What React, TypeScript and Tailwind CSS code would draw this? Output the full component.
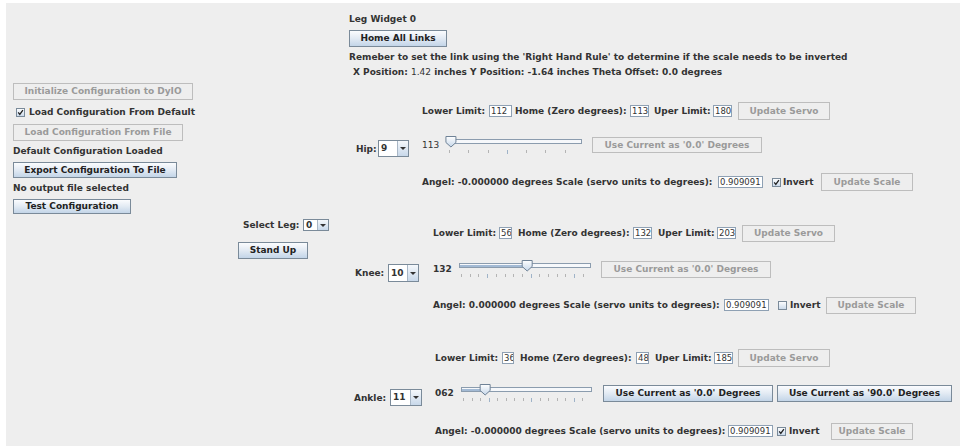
import clsx from 'clsx';
import type { ReactNode } from 'react';

function Btn({ on = false, className, children }: { on?: boolean; className: string; children: ReactNode }) {
    return (
        <div
            className={clsx(
                'flex shrink-0 items-center justify-center border leading-none',
                on
                    ? 'border-[#7a8a99] bg-linear-to-b from-[#fbfcfe] via-[#e2eaf3] to-[#c3d5e8] text-[#222]'
                    : 'border-[#bdbdbd] bg-[#eeeeee] text-[#9a9a9a]',
                className,
            )}
        >
            {children}
        </div>
    );
}

function Field({ className, children }: { className: string; children: ReactNode }) {
    return (
        <div
            className={clsx(
                'flex h-[12px] shrink-0 items-center overflow-hidden border border-[#8ea0b3] bg-white pl-[1px] text-[8.5px] font-normal leading-none text-[#333]',
                className,
            )}
        >
            {children}
        </div>
    );
}

function Check({ on, className }: { on: boolean; className?: string }) {
    return (
        <svg width="9" height="9" viewBox="0 0 9 9" className={clsx('shrink-0', className)}>
            <defs>
                <linearGradient id="cbg" x1="0" y1="0" x2="0" y2="1">
                    <stop offset="0" stopColor="#ffffff" />
                    <stop offset="1" stopColor="#c8d8ea" />
                </linearGradient>
            </defs>
            <rect x="0.5" y="0.5" width="8" height="8" fill="url(#cbg)" stroke="#7a8a99" />
            {on && <path d="M2.2 4.4 L3.8 6.4 L6.9 2.2" stroke="#222" strokeWidth="1.3" fill="none" />}
        </svg>
    );
}

function Combo({ value, className }: { value: string; className: string }) {
    return (
        <div className={clsx('flex shrink-0 border border-[#7a8a99] bg-white', className)}>
            <div className="flex flex-1 items-center pl-[2px] leading-none">{value}</div>
            <div className="flex w-[11px] items-center justify-center border-l border-[#a9b7c6] bg-linear-to-b from-[#f5f8fb] to-[#c8d8ea]">
                <svg width="6" height="3" viewBox="0 0 6 3">
                    <path d="M0 0H6L3 3Z" fill="#333" />
                </svg>
            </div>
        </div>
    );
}

// slider drawn like the Metal/Ocean JSlider: track, filled part, ticks every 10 units
function Slider({ w, a, b, min, max, val }: { w: number; a: number; b: number; min: number; max: number; val: number }) {
    const len = b - a;
    const pos = (v: number) => a + 2 + ((v - min) / (max - min)) * (len - 4);
    const tx = pos(val);
    const ticks: number[] = [];
    for (let v = min; v <= max; v += 10) ticks.push(pos(v));
    return (
        <svg width={w} height="20" className="shrink-0">
            <defs>
                <linearGradient id="thg" x1="0" y1="0" x2="0" y2="1">
                    <stop offset="0" stopColor="#ffffff" />
                    <stop offset="1" stopColor="#c5d6e9" />
                </linearGradient>
            </defs>
            <rect x={a + 0.5} y="4.5" width={len - 1} height="4" fill="#f6f8fb" stroke="#8b9cae" />
            <rect x={a + 1} y="6" width={Math.max(0, tx - a - 1)} height="2" fill="#a3bad4" />
            {ticks.map((x, i) => (
                <line
                    key={i}
                    x1={Math.round(x) + 0.5}
                    x2={Math.round(x) + 0.5}
                    y1="15"
                    y2={i % 5 === 3 ? 19 : 18}
                    stroke={i % 5 === 3 ? '#9fb3c8' : '#b4b4b4'}
                />
            ))}
            <path
                d={`M${tx - 5} 1.5 H${tx + 5} V7.5 L${tx} 12 L${tx - 5} 7.5 Z`}
                fill="url(#thg)"
                stroke="#6f8296"
            />
        </svg>
    );
}

const S = 'shrink-0';

export default function App() {
    return (
        <div className="h-[446px] w-[965px] overflow-hidden bg-white pl-[6px] pr-[5px] pt-[3px]">
            <div className="flex h-[443px] whitespace-nowrap bg-[#eeeeee] font-['DejaVu_Sans',sans-serif] text-[9px] font-bold leading-[12px] text-[#333]">
                {/* left column */}
                <div className="flex w-[224px] shrink-0 flex-col items-start pl-[7px] pt-[80px]">
                    <Btn className="h-[17px] w-[180px]">Initialize Configuration to DyIO</Btn>
                    <div className="mt-[6px] flex h-[12px] items-center">
                        <Check on className="ml-[3px]" />
                        <span className="ml-[4px]">Load Configuration From Default</span>
                    </div>
                    <Btn className="mt-[6px] h-[17px] w-[170px]">Load Configuration From File</Btn>
                    <div className="mt-[4px] h-[12px]">Default Configuration Loaded</div>
                    <Btn on className="mt-[5px] h-[16px] w-[164px]">
                        Export Configuration To File
                    </Btn>
                    <div className="mt-[4px] h-[12px]">No output file selected</div>
                    <Btn on className="mt-[5px] h-[15px] w-[118px]">
                        Test Configuration
                    </Btn>
                </div>

                {/* middle column */}
                <div className="flex w-[119px] shrink-0 flex-col items-start pl-[8px] pt-[215px]">
                    <div className="flex h-[14px] items-center">
                        <span className="ml-[5px] w-[60px]">Select Leg:</span>
                        <Combo value="0" className="h-[12px] w-[26px]" />
                    </div>
                    <Btn on className="mt-[10px] h-[17px] w-[70px]">
                        Stand Up
                    </Btn>
                </div>

                {/* leg widget */}
                <div className="flex min-w-0 flex-1 flex-col items-start pt-[10px]">
                    <div className="h-[12px]">Leg Widget 0</div>
                    <Btn on className="mt-[5px] h-[17px] w-[98px]">
                        Home All Links
                    </Btn>
                    <div className="mt-[4px] h-[12px]">
                        Remeber to set the link using the 'Right Hand Rule' to determine if the scale needs to be inverted
                    </div>
                    <div className="ml-[4px] mt-[3px] h-[12px]">
                        X Position: <span className="font-normal">1.42</span> inches Y Position: -1.64 inches Theta
                        Offset: 0.0 degrees
                    </div>

                    {/* Hip */}
                    <div className="mt-[23px] flex">
                        <div className="flex w-[73px] shrink-0 items-center pl-[7px] pt-[4px]">
                            <span className="w-[22px]">Hip:</span>
                            <Combo value="9" className="h-[17px] w-[31px]" />
                        </div>
                        <div className="flex flex-col">
                            <div className="flex h-[20px] items-center">
                                <span className={clsx(S, 'w-[67px]')}>Lower Limit:</span>
                                <Field className="w-[23px]">112</Field>
                                <span className={clsx(S, 'w-[118px] pl-[3px]')}>Home (Zero degrees):</span>
                                <Field className="w-[19px]">113</Field>
                                <span className={clsx(S, 'w-[64px] pl-[5px]')}>Uper Limit:</span>
                                <Field className="w-[19px]">180</Field>
                                <Btn className="ml-[6px] h-[18px] w-[92px]">Update Servo</Btn>
                            </div>
                            <div className="mt-[14px] flex h-[20px] items-center">
                                <span className={clsx(S, 'w-[22px] font-normal')}>113</span>
                                <Slider w={144} a={3} b={138} min={112} max={180} val={113} />
                                <Btn className="ml-[4px] h-[16px] w-[170px]">Use Current as '0.0' Degrees</Btn>
                            </div>
                            <div className="mt-[17px] flex h-[20px] items-center">
                                <span className={clsx(S, 'w-[296px]')}>
                                    Angel: -0.000000 degrees Scale (servo units to degrees):
                                </span>
                                <Field className="w-[45px]">0.909091</Field>
                                <Check on className="ml-[9px]" />
                                <span className={clsx(S, 'ml-[2px] w-[38px]')}>Invert</span>
                                <Btn className="h-[18px] w-[92px]">Update Scale</Btn>
                            </div>
                        </div>
                    </div>

                    {/* Knee */}
                    <div className="mt-[31px] flex">
                        <div className="flex w-[84px] shrink-0 items-center pl-[6px] pt-[8px]">
                            <span className="w-[33px]">Knee:</span>
                            <Combo value="10" className="h-[18px] w-[31px]" />
                        </div>
                        <div className="flex flex-col">
                            <div className="flex h-[20px] items-center">
                                <span className={clsx(S, 'w-[66px]')}>Lower Limit:</span>
                                <Field className="w-[13px]">56</Field>
                                <span className={clsx(S, 'w-[121px] pl-[6px]')}>Home (Zero degrees):</span>
                                <Field className="w-[19px]">132</Field>
                                <span className={clsx(S, 'w-[65px] pl-[6px]')}>Uper Limit:</span>
                                <Field className="w-[19px]">203</Field>
                                <Btn className="ml-[6px] h-[17px] w-[93px]">Update Servo</Btn>
                            </div>
                            <div className="mt-[16px] flex h-[20px] items-center">
                                <span className={clsx(S, 'w-[23px]')}>132</span>
                                <Slider w={144} a={3} b={135} min={56} max={203} val={132} />
                                <Btn className="ml-[1px] h-[17px] w-[170px]">Use Current as '0.0' Degrees</Btn>
                            </div>
                            <div className="mt-[16px] flex h-[20px] items-center">
                                <span className={clsx(S, 'w-[291px]')}>
                                    Angel: 0.000000 degrees Scale (servo units to degrees):
                                </span>
                                <Field className="w-[45px]">0.909091</Field>
                                <Check on={false} className="ml-[9px]" />
                                <span className={clsx(S, 'ml-[3px] w-[36px]')}>Invert</span>
                                <Btn className="h-[17px] w-[90px]">Update Scale</Btn>
                            </div>
                        </div>
                    </div>

                    {/* Ankle */}
                    <div className="mt-[33px] flex">
                        <div className="flex w-[86px] shrink-0 items-center pl-[5px] pt-[6px]">
                            <span className="w-[36px]">Ankle:</span>
                            <Combo value="11" className="h-[17px] w-[32px]" />
                        </div>
                        <div className="flex flex-col">
                            <div className="flex h-[20px] items-center">
                                <span className={clsx(S, 'w-[67px]')}>Lower Limit:</span>
                                <Field className="w-[12px]">36</Field>
                                <span className={clsx(S, 'w-[122px] pl-[6px]')}>Home (Zero degrees):</span>
                                <Field className="w-[13px]">48</Field>
                                <span className={clsx(S, 'w-[65px] pl-[6px]')}>Uper Limit:</span>
                                <Field className="w-[19px]">185</Field>
                                <Btn className="ml-[5px] h-[18px] w-[92px]">Update Servo</Btn>
                            </div>
                            <div className="mt-[15px] flex h-[20px] items-center">
                                <span className={clsx(S, 'w-[23px]')}>062</span>
                                <Slider w={144} a={3} b={134} min={36} max={185} val={62} />
                                <Btn on className="ml-[1px] h-[17px] w-[170px]">
                                    Use Current as '0.0' Degrees
                                </Btn>
                                <Btn on className="ml-[4px] h-[17px] w-[175px]">
                                    Use Current as '90.0' Degrees
                                </Btn>
                            </div>
                            <div className="mt-[18px] flex h-[20px] items-center">
                                <span className={clsx(S, 'w-[293px]')}>
                                    Angel: -0.000000 degrees Scale (servo units to degrees):
                                </span>
                                <Field className="w-[45px]">0.909091</Field>
                                <Check on className="ml-[4px]" />
                                <span className={clsx(S, 'ml-[3px] w-[42px]')}>Invert</span>
                                <Btn className="h-[17px] w-[82px]">Update Scale</Btn>
                            </div>
                        </div>
                    </div>
                </div>
            </div>
        </div>
    );
}
